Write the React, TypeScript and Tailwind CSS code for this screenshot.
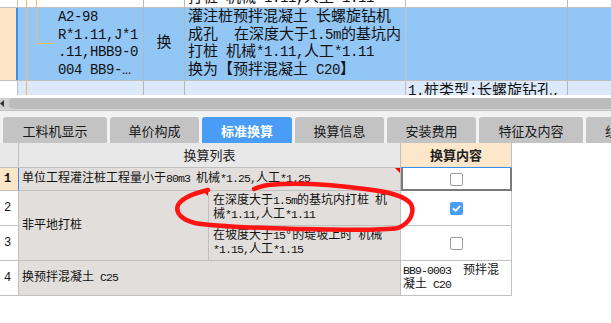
import React from "react";

const isLatin = (s: string) => /^[\x20-\x7e]+$/.test(s);

function Mixed({ t, latin }: { t: string; latin: string }) {
  const parts = t.split(/([\x20-\x7e]+)/).filter((p) => p.length > 0);
  return (
    <>
      {parts.map((p, i) =>
        isLatin(p) ? (
          <span key={i} className={latin}>
            {p}
          </span>
        ) : (
          <span key={i}>{p}</span>
        )
      )}
    </>
  );
}

const TOP_LATIN = "text-[14px] tracking-[-0.4px]";
const GRID_LATIN = "text-[11.5px] tracking-[-0.9px]";

function TopLine({ t }: { t: string }) {
  return (
    <div className="h-[17.5px] leading-[17.5px] whitespace-pre">
      <Mixed t={t} latin={TOP_LATIN} />
    </div>
  );
}

function GridLine({ t }: { t: string }) {
  return (
    <div className="h-[14px] leading-[14px] whitespace-pre">
      <Mixed t={t} latin={GRID_LATIN} />
    </div>
  );
}

function Box({ checked }: { checked?: boolean }) {
  if (checked) {
    return (
      <div className="w-[13px] h-[13px] rounded-[2px] bg-[#4a9df6] flex items-center justify-center">
        <svg width="9" height="9" viewBox="0 0 10 10">
          <path d="M1.5 5.3 L4 7.6 L8.6 2.6" stroke="white" strokeWidth="2" fill="none" strokeLinecap="round" strokeLinejoin="round" />
        </svg>
      </div>
    );
  }
  return <div className="w-[13px] h-[13px] rounded-[2px] border border-[#9c9c9c] bg-white" />;
}

function RedMark() {
  return <span className="absolute right-0 top-0 w-0 h-0 border-t-[5px] border-t-[#ff0000] border-l-[5px] border-l-transparent" />;
}

const ORANGE = "bg-[#f5b865]";
const TOPFONT = "font-['Liberation_Mono','Noto_Sans_CJK_SC',monospace] text-[15px] text-[#111]";
const GRIDFONT = "font-['Liberation_Mono','Noto_Sans_CJK_SC',monospace] text-[12px] text-[#111]";
const UIFONT = "font-['Noto_Sans_CJK_SC',sans-serif]";

const tabs: { label: string; w: string; active?: boolean }[] = [
  { label: "工料机显示", w: "w-[104px]" },
  { label: "单价构成", w: "w-[89px]" },
  { label: "标准换算", w: "w-[90px]", active: true },
  { label: "换算信息", w: "w-[89px]" },
  { label: "安装费用", w: "w-[89px]" },
  { label: "特征及内容", w: "w-[104px]" },
  { label: "组价方案", w: "w-[90px]" },
];

export default function App() {
  return (
    <div className={`relative w-[611px] h-[323px] overflow-hidden bg-white ${TOPFONT}`}>
      {/* ===== top grid ===== */}
      {/* row A (partial) */}
      <div className="flex h-[8px] border-b border-[#c0c0c0] bg-white">
        <div className="w-[18px] shrink-0 border-r border-[#c0c0c0]" />
        <div className="relative w-[126px] shrink-0 border-r border-[#b8b8b8]">
          <span className={`absolute left-[8px] top-0 bottom-0 w-px ${ORANGE}`} />
          <span className={`absolute left-[18px] top-0 bottom-0 w-px ${ORANGE}`} />
        </div>
        <div className="w-[41px] shrink-0 border-r border-[#b8b8b8]" />
        <div className="w-[221px] shrink-0 border-r border-[#c0c0c0] overflow-hidden flex items-end pl-[3px]">
          <div className="shrink-0">
            <TopLine t="打桩 机械*1.11,人工*1.11" />
          </div>
        </div>
        <div className="w-[162px] shrink-0 border-r border-[#b8b8b8]" />
        <div className="flex-1" />
      </div>

      {/* row B (selected) */}
      <div className="flex h-[73px] border-b border-[#c0c0c0] bg-[#92c6f5]">
        <div className="w-[18px] shrink-0 bg-[#fde5c8] border-r-2 border-[#3c8cf0]" />
        <div className="relative w-[126px] shrink-0 border-r border-[#b0b8c0] pl-[40px] pt-[1px]">
          <span className={`absolute left-[8px] top-0 bottom-0 w-px ${ORANGE}`} />
          <span className={`absolute left-[18px] top-0 h-[36px] w-px ${ORANGE}`} />
          <span className={`absolute left-[18px] top-[35px] h-px w-[17px] ${ORANGE}`} />
          <TopLine t="A2-98" />
          <TopLine t="R*1.11,J*1" />
          <TopLine t=".11,HBB9-0" />
          <TopLine t="004 BB9-…" />
        </div>
        <div className="w-[41px] shrink-0 border-r border-[#b0b8c0] flex items-center justify-center">
          <span>换</span>
        </div>
        <div className="w-[221px] shrink-0 border-r border-[#b8c4d0] pl-[3px] pt-[1px]">
          <TopLine t="灌注桩预拌混凝土 长螺旋钻机" />
          <TopLine t="成孔  在深度大于1.5m的基坑内" />
          <TopLine t="打桩 机械*1.11,人工*1.11" />
          <TopLine t="换为【预拌混凝土 C20】" />
        </div>
        <div className="w-[162px] shrink-0 border-r border-[#b0b8c0]" />
        <div className="flex-1" />
      </div>

      {/* row C (partial) */}
      <div className="flex h-[14px] bg-[#dce9fb] overflow-hidden">
        <div className="w-[18px] shrink-0 bg-white border-r border-[#c0c0c0]" />
        <div className="relative w-[126px] shrink-0 border-r border-[#b8b8b8]">
          <span className={`absolute left-[8px] top-0 bottom-0 w-px ${ORANGE}`} />
        </div>
        <div className="w-[41px] shrink-0 border-r border-[#b8b8b8]" />
        <div className="w-[221px] shrink-0 border-r border-[#c0c0c0]" />
        <div className="w-[162px] shrink-0 border-r border-[#b8b8b8] pl-[2px] pt-[2px] overflow-hidden">
          <TopLine t="1.桩类型:长螺旋钻孔," />
        </div>
        <div className="flex-1" />
      </div>

      {/* scrollbar */}
      <div className="h-[3px] bg-white" />
      <div className="flex h-[11px] items-center bg-[#cfcfcf]">
        <div className="w-[9px] shrink-0 flex items-center">
          <svg width="4" height="7" viewBox="0 0 4 7">
            <path d="M4 0 L0 3.5 L4 7 Z" fill="#333" />
          </svg>
        </div>
        <div className="flex-1 h-[11px] rounded-l-[5px] bg-[#bcbcbc]" />
      </div>
      <div className="h-px bg-[#dadada]" />
      <div className="h-px bg-[#bfbfbf]" />

      {/* tabs */}
      <div className={`h-[32px] bg-[#f2f2f2] pt-[6px] pl-[3px] flex gap-[3px] ${UIFONT}`}>
        {tabs.map((tab) => (
          <div
            key={tab.label}
            className={`${tab.w} shrink-0 h-[26px] rounded-t-[3px] flex items-center justify-center pt-[2px] text-[13px] ${
              tab.active ? "bg-[#4a9df6] text-white font-bold" : "bg-[#c3c3c3] text-[#1a1a1a]"
            }`}
          >
            {tab.label}
          </div>
        ))}
      </div>

      {/* ===== lower grid ===== */}
      <div className="grid w-[512px] grid-cols-[19px_190px_192px_111px] grid-rows-[25px_23px_35px_35px_35px]">
        {/* header */}
        <div className="bg-[#e8e8e8] border-r border-b border-[#c0c0c0]" />
        <div className={`col-span-2 bg-[#e8e8e8] border-r border-b border-[#c0c0c0] flex items-center justify-center text-[13px] text-[#222] ${UIFONT}`}>
          换算列表
        </div>
        <div className={`bg-[#fde7ca] border-r border-[#c0c0c0] border-b border-b-[#3b8eea] flex items-center justify-center text-[13px] font-bold text-[#222] ${UIFONT}`}>
          换算内容
        </div>

        {/* row 1 */}
        <div className={`bg-[#fde5c8] border-r border-r-[#3c8cf0] border-b border-b-[#c0c0c0] flex items-center pl-[4px] ${GRIDFONT} font-bold`}>
          1
        </div>
        <div className={`relative col-span-2 bg-[#e2dedb] border-r border-b border-[#c0c0c0] flex items-center pl-[3px] ${GRIDFONT}`}>
          <GridLine t="单位工程灌注桩工程量小于80m3 机械*1.25,人工*1.25" />
          <RedMark />
        </div>
        <div className="relative bg-white border-r border-b border-[#c0c0c0] flex items-center justify-center">
          <Box />
          <span className="absolute left-0 top-0 -right-[1px] -bottom-[1px] border-2 border-t-0 border-[#7a7a7a]" />
        </div>

        {/* row 2 */}
        <div className={`bg-white border-r border-b border-[#c0c0c0] flex items-center pl-[4px] ${GRIDFONT}`}>2</div>
        <div className={`relative row-span-2 bg-[#e2dedb] border-r border-b border-[#c0c0c0] flex items-center pl-[3px] ${GRIDFONT}`}>
          <GridLine t="非平地打桩" />
          <RedMark />
        </div>
        <div className={`bg-[#e2dedb] border-r border-b border-[#c0c0c0] flex flex-col justify-center pl-[4px] ${GRIDFONT}`}>
          <GridLine t="在深度大于1.5m的基坑内打桩 机" />
          <GridLine t="械*1.11,人工*1.11" />
        </div>
        <div className="bg-white border-r border-b border-[#c0c0c0] flex items-center justify-center">
          <Box checked />
        </div>

        {/* row 3 */}
        <div className={`bg-white border-r border-b border-[#c0c0c0] flex items-center pl-[4px] ${GRIDFONT}`}>3</div>
        <div className={`bg-[#e2dedb] border-r border-b border-[#c0c0c0] flex flex-col justify-center pl-[4px] ${GRIDFONT}`}>
          <GridLine t="在坡度大于15°的堤坡上时 机械" />
          <GridLine t="*1.15,人工*1.15" />
        </div>
        <div className="bg-white border-r border-b border-[#c0c0c0] flex items-center justify-center">
          <Box />
        </div>

        {/* row 4 */}
        <div className={`bg-white border-r border-b border-[#c0c0c0] flex items-center pl-[4px] ${GRIDFONT}`}>4</div>
        <div className={`col-span-2 bg-[#e2dedb] border-r border-b border-[#c0c0c0] flex items-center pl-[3px] ${GRIDFONT}`}>
          <GridLine t="换预拌混凝土 C25" />
        </div>
        <div className={`bg-white border-r border-b border-[#c0c0c0] flex flex-col justify-center pl-[2px] ${GRIDFONT}`}>
          <GridLine t="BB9-0003  预拌混" />
          <GridLine t="凝土 C20" />
        </div>
      </div>

      {/* red hand-drawn annotation */}
      <svg className="absolute left-0 top-0 pointer-events-none" width="611" height="323" viewBox="0 0 611 323">
        <path
          d="M208 190 C195 193 182 198 178 205 C175 213 182 220 195 223 C215 227 260 228 300 229 C340 230 380 231 398 228 C410 223 415 213 411 204 C405 196 390 192 365 189 C335 185 300 182 268 185 C262 186 258 187 254 189"
          stroke="#ff1414"
          strokeWidth="4.5"
          fill="none"
          strokeLinecap="round"
          strokeLinejoin="round"
        />
      </svg>
    </div>
  );
}
